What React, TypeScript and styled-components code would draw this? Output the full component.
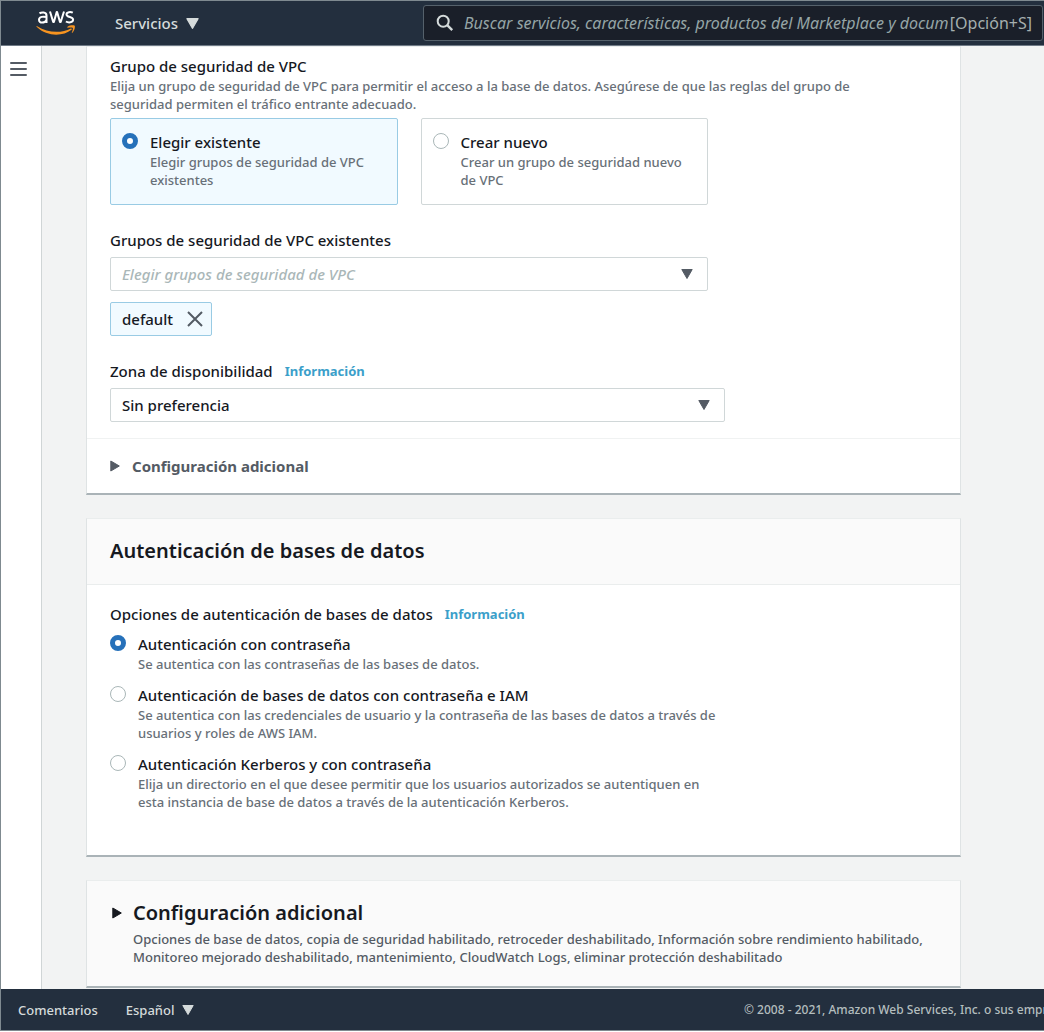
import React, { useState } from 'react';
import styled, { createGlobalStyle } from 'styled-components';

const GlobalStyle = createGlobalStyle`
  * { box-sizing: border-box; }
  body {
    margin: 0;
    color: #16191f;
    background: #fff;
    font-family: "Noto Sans", "Open Sans", sans-serif;
    font-size: 15px;
    font-weight: 500;
    line-height: 22px;
  }
  button, input, select { font: inherit; color: inherit; }
`;

const Shell = styled.div`
  display: grid;
  grid-template-rows: auto 1fr auto;
  height: calc(100vh - 1px);
  min-height: 0;
  overflow: hidden;
  border: 1px solid #7f8a90;
  border-right: 0;
`;

const TopBar = styled.header`
  display: flex;
  align-items: center;
  height: 45px;
  padding: 0 1px 0 35px;
  background: #232f3e;
  border-bottom: 1px solid #6f7a86;
`;

const Logo = styled.a`
  display: flex;
  margin-right: 38px;
`;

const BarButton = styled.button<{ $small?: boolean }>`
  display: flex;
  align-items: center;
  gap: 8px;
  padding: 0;
  border: 0;
  background: none;
  color: #d5dbdb;
  font-size: ${p => (p.$small ? 13 : 15)}px;
  cursor: pointer;
`;

const Search = styled.label`
  display: flex;
  align-items: center;
  flex: 0 1 620px;
  min-width: 0;
  height: 36px;
  margin-left: auto;
  padding: 0 10px 0 12px;
  border: 1px solid #55616b;
  border-radius: 3px;
  background: #1a1f29;
  color: #a5afaf;
  font-size: 16px;
  font-weight: 400;
`;

const SearchInput = styled.input`
  flex: 1;
  min-width: 0;
  margin: 0 2px 0 10px;
  padding: 0;
  border: 0;
  outline: 0;
  background: none;
  &::placeholder { color: #95a5a6; font-style: italic; opacity: 1; }
`;

const Middle = styled.div`
  display: flex;
  min-height: 0;
`;

const Rail = styled.nav`
  flex: 0 0 41px;
  padding: 15px 8px;
  background: #fff;
  border-right: 1px solid #d0d5d6;
`;

const IconButton = styled.button`
  display: flex;
  padding: 0;
  border: 0;
  background: none;
  cursor: pointer;
`;

const Main = styled.main`
  flex: 1;
  min-width: 0;
  padding: 0 83px 0 44px;
  overflow: hidden;
  background: #f2f3f3;
`;

const Panel = styled.section`
  margin-bottom: 23px;
  background: #fff;
  border: 1px solid #dfe3e4;
  border-top-color: #eaeded;
  border-bottom: 2px solid #aab3b7;
`;

const PanelBody = styled.div<{ $top: number; $bottom: number }>`
  padding: ${p => p.$top}px 23px ${p => p.$bottom}px;
`;

const PanelHeader = styled.div`
  padding: 20px 23px 21px;
  background: #fafafa;
  border-bottom: 1px solid #eaeded;
`;

const Heading = styled.h2`
  margin: 0;
  font-size: 20px;
  line-height: 24px;
  font-weight: 600;
`;

const Group = styled.fieldset<{ $width?: number }>`
  display: block;
  min-width: 0;
  max-width: ${p => p.$width ?? 615}px;
  margin: 0 0 24px;
  padding: 0;
  border: 0;
  &:last-child { margin-bottom: 0; }
`;

const Legend = styled.legend`
  padding: 0;
`;

const LabelRow = styled.div`
  display: flex;
  align-items: center;
  gap: 12px;
  margin-bottom: 6px;
`;

const Info = styled.a`
  color: #3b9fca;
  font-size: 13px;
  font-weight: 700;
  text-decoration: none;
`;

const Hint = styled.span`
  display: block;
  color: #687078;
  font-size: 13px;
  line-height: 18px;
  white-space: nowrap;
`;

const Tiles = styled.div`
  display: grid;
  grid-template-columns: 1fr 1fr;
  gap: 23px;
  max-width: 598px;
  margin-top: 5px;
`;

const Tile = styled.label<{ $on: boolean }>`
  display: flex;
  gap: 12px;
  padding: 12px 11px 15px;
  border: 1px solid ${p => (p.$on ? '#99cbe4' : '#d0d7d8')};
  border-radius: 2px;
  background: ${p => (p.$on ? '#f1faff' : '#fff')};
  cursor: pointer;
`;

const Radio = styled.input.attrs({ type: 'radio' })`
  appearance: none;
  flex: none;
  width: 16px;
  height: 16px;
  margin: 2px 0 0;
  border: 1px solid #aab7b8;
  border-radius: 50%;
  background: #fff;
  &:checked { border: 5px solid #2671ba; }
`;

const Options = styled.div`
  display: grid;
  gap: 11px;
  margin-top: 8px;
`;

const Option = styled.label`
  display: flex;
  gap: 12px;
  cursor: pointer;
`;

const SelectBox = styled.div`
  display: grid;
  align-items: center;
  > * { grid-area: 1 / 1; }
  > svg { justify-self: end; margin-right: 15px; pointer-events: none; }
`;

const Select = styled.select<{ $empty?: boolean }>`
  appearance: none;
  width: 100%;
  height: 34px;
  padding: 0 36px 0 11px;
  border: 1px solid #d0d7d8;
  border-radius: 2px;
  background: #fff;
  color: ${p => (p.$empty ? '#aab7b8' : '#16191f')};
  font-style: ${p => (p.$empty ? 'italic' : 'normal')};
`;

const Token = styled.div`
  display: flex;
  width: fit-content;
  align-items: center;
  gap: 14px;
  height: 34px;
  margin-top: 11px;
  padding: 0 8px 0 11px;
  border: 1px solid #99cbe4;
  border-radius: 2px;
  background: #f1faff;
`;

const Expander = styled.button<{ $strong?: boolean }>`
  display: flex;
  align-items: center;
  gap: ${p => (p.$strong ? 11 : 12)}px;
  width: 100%;
  padding: ${p => (p.$strong ? '0 0 0 2px' : '16px 23px')};
  border: 0;
  border-top: ${p => (p.$strong ? '0' : '1px solid #f0f2f2')};
  background: none;
  color: ${p => (p.$strong ? '#16191f' : '#545b64')};
  font-weight: ${p => (p.$strong ? 600 : 700)};
  text-align: left;
  cursor: pointer;
`;

const ExpandPanel = styled(Panel)`
  padding: 20px 23px;
  background: #fafafa;
`;

const Summary = styled.div`
  padding: 5px 0 0 23px;
  ${Hint} { color: #545b64; }
`;

const Footer = styled.footer`
  display: flex;
  align-items: center;
  gap: 28px;
  height: 41px;
  padding-left: 17px;
  background: #232f3e;
  color: #d5dbdb;
  font-size: 13px;
`;

const FootLink = styled.a`
  color: inherit;
  text-decoration: none;
`;

const Copyright = styled.span`
  flex: 0 0 300px;
  margin-left: auto;
  overflow: hidden;
  white-space: nowrap;
  color: #b4bebe;
  font-size: 12px;
`;

const Down = ({ size = 12, color = '#545b64' }: { size?: number; color?: string }) => (
  <svg width={size} height={size - 2} viewBox="0 0 12 10" aria-hidden="true">
    <path d="M0.8 0.5h10.4L6 9.5z" fill={color} stroke={color} strokeLinejoin="round" />
  </svg>
);

const Right = ({ color }: { color: string }) => (
  <svg width="10" height="12" viewBox="0 0 10 12" aria-hidden="true">
    <path d="M0.8 1v10L9.3 6z" fill={color} stroke={color} strokeLinejoin="round" />
  </svg>
);

const AwsLogo = () => (
  <svg width="41" height="26" viewBox="0 0 41 26" role="img" aria-label="aws">
    <g fill="none" stroke="#fff" strokeWidth="2" strokeLinecap="butt" strokeLinejoin="round">
      <path d="M3.5 3.4C5 2.2 10.5 1.3 10.5 5.4V13M10.5 7C7.500 6.300 3 6.400 3 9.800c0 4 6 3.400 7.500.2" />
      <path d="M14 1.500l3.200 10.500h.7L20.700 2h.4l2.900 10h.7L28 1.500" />
      <path d="M36.800 2.700c-2-1-6.300-1-6.300 1.700 0 3.200 6.600 2 6.600 5.200 0 3.400-5 3.300-7.200 1.900" />
    </g>
    <path d="M1.200 16.200c10.500 7 24.500 7.200 33.600 2.300.9-.4 1.500.5.700 1.200C27 26.600 11 26.800.8 17c-.6-.6-.2-1.200.4-.8z" fill="#f79420" />
    <path d="M31.500 16.700c2-1.500 6.500-1.700 7.200-.9.700 1-.3 5-2.300 7-.4.300-.8.100-.6-.3.600-1.400 1.500-4 1-4.600-.6-.7-3.400-.4-4.900-.2-.6.100-.8-.6-.4-1z" fill="#f79420" />
  </svg>
);

const authOptions = [
  { id: 'password', title: 'Autenticación con contraseña', lines: ['Se autentica con las contraseñas de las bases de datos.'] },
  {
    id: 'iam',
    title: 'Autenticación de bases de datos con contraseña e IAM',
    lines: ['Se autentica con las credenciales de usuario y la contraseña de las bases de datos a través de', 'usuarios y roles de AWS IAM.'],
  },
  {
    id: 'kerberos',
    title: 'Autenticación Kerberos y con contraseña',
    lines: ['Elija un directorio en el que desee permitir que los usuarios autorizados se autentiquen en', 'esta instancia de base de datos a través de la autenticación Kerberos.'],
  },
];

const vpcOptions = [
  { id: 'existing', title: 'Elegir existente', lines: ['Elegir grupos de seguridad de VPC', 'existentes'] },
  { id: 'new', title: 'Crear nuevo', lines: ['Crear un grupo de seguridad nuevo', 'de VPC'] },
];

const Lines = ({ lines }: { lines: string[] }) => <>{lines.map(l => <Hint key={l}>{l}</Hint>)}</>;

export default function App() {
  const [vpc, setVpc] = useState('existing');
  const [auth, setAuth] = useState('password');

  return (
    <>
      <GlobalStyle />
      <Shell>
        <TopBar>
          <Logo href="#"><AwsLogo /></Logo>
          <BarButton type="button">Servicios <Down size={13} color="#d5dbdb" /></BarButton>
          <Search>
            <svg width="18" height="18" viewBox="0 0 18 18" aria-hidden="true" fill="none" stroke="#d5dbdb" strokeWidth="2">
              <circle cx="7.200" cy="7.200" r="5.500" />
              <path d="M11.200 11.200l5 5" strokeWidth="2.400" />
            </svg>
            <SearchInput aria-label="Buscar" placeholder="Buscar servicios, características, productos del Marketplace y documentos" />
            <span>[Opción+S]</span>
          </Search>
        </TopBar>

        <Middle>
          <Rail>
            <IconButton type="button" aria-label="Menú">
              <svg width="18" height="16" viewBox="0 0 18 16" stroke="#545b64" strokeWidth="2" strokeLinecap="round" aria-hidden="true">
                <path d="M2 2h15M2 8h15M2 14h15" />
              </svg>
            </IconButton>
          </Rail>

          <Main>
            <Panel>
              <PanelBody $top={8} $bottom={16}>
                <Group $width={760}>
                  <Legend>Grupo de seguridad de VPC</Legend>
                  <Lines lines={['Elija un grupo de seguridad de VPC para permitir el acceso a la base de datos. Asegúrese de que las reglas del grupo de', 'seguridad permiten el tráfico entrante adecuado.']} />
                  <Tiles>
                    {vpcOptions.map(o => (
                      <Tile key={o.id} $on={vpc === o.id}>
                        <Radio name="vpc" checked={vpc === o.id} onChange={() => setVpc(o.id)} />
                        <span>{o.title}<Lines lines={o.lines} /></span>
                      </Tile>
                    ))}
                  </Tiles>
                </Group>
                <Group as="div" $width={598}>
                  <LabelRow><label htmlFor="groups">Grupos de seguridad de VPC existentes</label></LabelRow>
                  <SelectBox>
                    <Select id="groups" $empty><option>Elegir grupos de seguridad de VPC</option></Select>
                    <Down />
                  </SelectBox>
                  <Token>
                    default
                    <IconButton type="button" aria-label="Quitar default">
                      <svg width="16" height="16" viewBox="0 0 16 16" stroke="#545b64" strokeWidth="2" aria-hidden="true">
                        <path d="M1 1l14 14M15 1L1 15" />
                      </svg>
                    </IconButton>
                  </Token>
                </Group>
                <Group as="div">
                  <LabelRow><label htmlFor="zone">Zona de disponibilidad</label><Info href="#">Información</Info></LabelRow>
                  <SelectBox>
                    <Select id="zone"><option>Sin preferencia</option></Select>
                    <Down />
                  </SelectBox>
                </Group>
              </PanelBody>
              <Expander type="button"><Right color="#545b64" />Configuración adicional</Expander>
            </Panel>

            <Panel>
              <PanelHeader><Heading>Autenticación de bases de datos</Heading></PanelHeader>
              <PanelBody $top={18} $bottom={44}>
                <Group $width={640} aria-labelledby="auth-label">
                  <LabelRow><span id="auth-label">Opciones de autenticación de bases de datos</span><Info href="#">Información</Info></LabelRow>
                  <Options>
                    {authOptions.map(o => (
                      <Option key={o.id}>
                        <Radio name="auth" checked={auth === o.id} onChange={() => setAuth(o.id)} />
                        <span>{o.title}<Lines lines={o.lines} /></span>
                      </Option>
                    ))}
                  </Options>
                </Group>
              </PanelBody>
            </Panel>

            <ExpandPanel>
              <Heading><Expander type="button" $strong><Right color="#16191f" />Configuración adicional</Expander></Heading>
              <Summary>
                <Lines lines={['Opciones de base de datos, copia de seguridad habilitado, retroceder deshabilitado, Información sobre rendimiento habilitado,', 'Monitoreo mejorado deshabilitado, mantenimiento, CloudWatch Logs, eliminar protección deshabilitado']} />
              </Summary>
            </ExpandPanel>
          </Main>
        </Middle>

        <Footer>
          <FootLink href="#">Comentarios</FootLink>
          <BarButton type="button" $small>Español <Down color="#d5dbdb" /></BarButton>
          <Copyright>© 2008 - 2021, Amazon Web Services, Inc. o sus empresas afiliadas.</Copyright>
        </Footer>
      </Shell>
    </>
  );
}
